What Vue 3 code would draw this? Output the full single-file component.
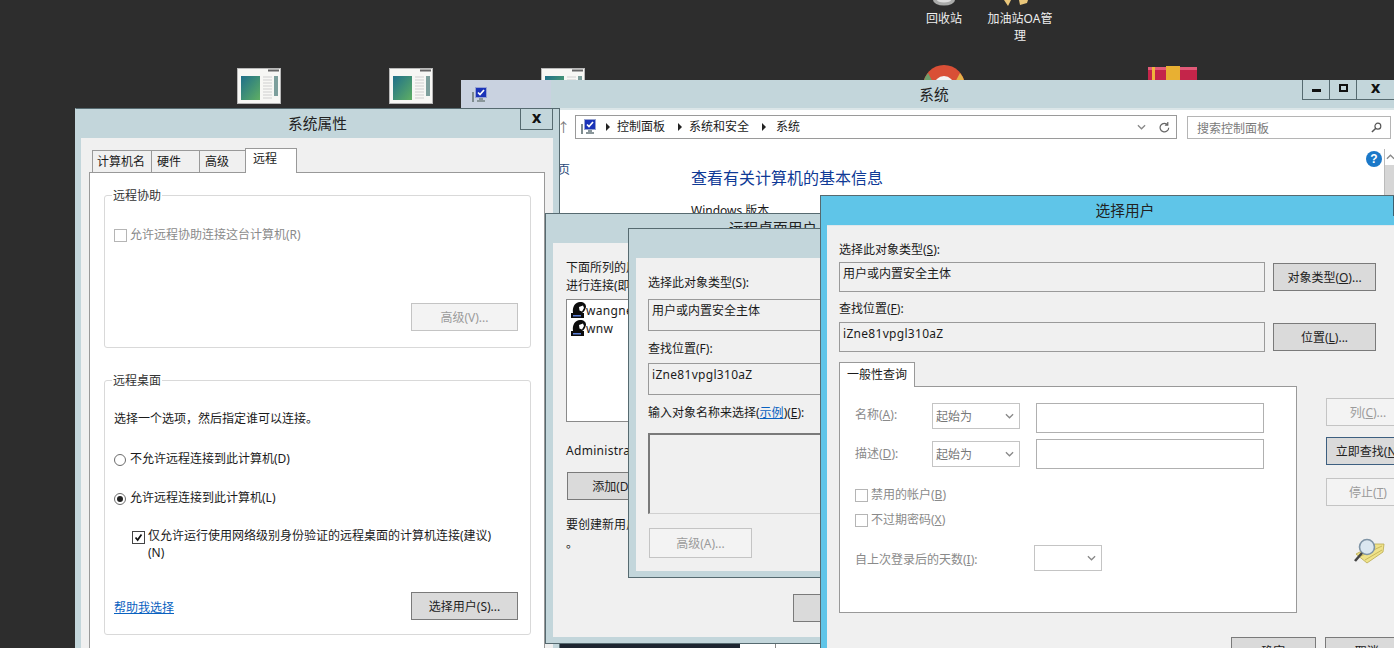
<template>
  <div class="desktop">
    <!-- desktop icons -->
    <svg v-for="n in 3" :key="n" class="thumb" :class="'thumb-' + n" viewBox="0 0 44 36">
      <rect x="0.5" y="0.5" width="43" height="35" fill="#f7f7f4" stroke="#b8b8b8" />
      <rect x="31" y="1.5" width="11" height="2" fill="#666" />
      <defs>
        <linearGradient :id="'tg' + n" x1="0" y1="0" x2="1" y2="1">
          <stop offset="0" stop-color="#1f6f8a" />
          <stop offset="1" stop-color="#5faf63" />
        </linearGradient>
      </defs>
      <rect x="4" y="8" width="19" height="24" :fill="'url(#tg' + n + ')'" />
      <path d="M26 9h9M26 12h9M26 15h9M26 18h9M26 21h9M26 24h9M26 27h9M26 30h9" stroke="#cfcfcf" />
      <rect x="37" y="8" width="4" height="20" fill="#7d9f9c" />
    </svg>

    <svg class="bin" viewBox="0 0 24 6">
      <ellipse cx="12" cy="0" rx="11" ry="5.5" fill="#a9aaa9" />
      <ellipse cx="12" cy="0" rx="7" ry="2.5" fill="#ddd" />
    </svg>
    <div class="desk-label bin-label">回收站</div>
    <svg class="oa" viewBox="0 0 28 7">
      <path d="M4 0l4 6 3-6zM19 0l1 5 7-2 1-3z" fill="#e9c67a" />
    </svg>
    <div class="desk-label oa-label">加油站OA管理</div>
    <svg class="chrome" viewBox="0 0 42 16">
      <circle cx="21" cy="21" r="21" fill="#d94f36" />
      <path d="M0 21a21 21 0 0 1 5-13l7 13z" fill="#6f9d6c" />
      <path d="M42 21a21 21 0 0 0-5-13l-7 13z" fill="#e3b24a" />
      <circle cx="21" cy="21" r="10" fill="#f3f3f3" />
    </svg>
    <svg class="bundle" viewBox="0 0 49 15">
      <rect x="0" y="1" width="49" height="14" fill="#c4254a" />
      <rect x="0" y="1" width="49" height="3" fill="#e25a78" />
      <rect x="4" y="1" width="3" height="14" fill="#f0b43c" />
      <rect x="18" y="0" width="14" height="15" fill="#e8b032" />
    </svg>

    <!-- 系统 -->
    <section class="win win-sys">
      <header class="titlebar sys-title">
        <svg class="mon mon-title" viewBox="0 0 16 16"><use href="#mon" /></svg>
        <span>系统</span>
        <div class="caption">
          <button class="cap"><i class="g-min"></i></button>
          <button class="cap"><i class="g-max"></i></button>
          <button class="cap cap-x">x</button>
        </div>
      </header>
      <div class="sys-nav">
        <span class="up">↑</span>
        <div class="address">
          <svg class="mon" viewBox="0 0 16 16">
            <defs>
              <g id="mon">
                <path d="M1 5h2v10H1z" fill="#7f8c8f" />
                <rect x="4.5" y="0.5" width="11" height="10" fill="#1a33b8" stroke="#97a3d2" />
                <path d="M7 5.500l2 2 4-4.500" stroke="#fff" stroke-width="1.7" fill="none" />
                <path d="M8 11h4v2h2v2H6v-2h2z" fill="#8a969a" />
              </g>
            </defs>
            <use href="#mon" />
          </svg>
          <template v-for="c in crumbs" :key="c">
            <i class="crumb-arrow"></i>
            <span class="crumb">{{ c }}</span>
          </template>
          <svg class="chev addr-chev" viewBox="0 0 10 6"><path d="M1 1l4 4 4-4" /></svg>
          <svg class="refresh" viewBox="0 0 12 14">
            <path d="M9.6 4.200a4.700 4.700 0 1 0 1 3M9.600 1v3.400H6.400" fill="none" stroke="#666" stroke-width="1.3" />
          </svg>
        </div>
        <div class="search">
          <span>搜索控制面板</span>
          <svg class="search-ic" viewBox="0 0 12 12">
            <circle cx="7.5" cy="4.5" r="3.2" fill="none" stroke="#555" stroke-width="1.3" />
            <path d="M5 7l-4 4" stroke="#555" stroke-width="1.6" />
          </svg>
        </div>
      </div>
      <div class="sys-main">
        <div class="side">页</div>
        <div class="sys-content">
          <h1>查看有关计算机的基本信息</h1>
          <div class="sys-sub">Windows 版本</div>
        </div>
        <div class="help">?</div>
        <div class="scroll"><div class="scroll-up"><svg class="chev" viewBox="0 0 10 6"><path d="M1 5l4-4 4 4" /></svg></div></div>
      </div>
      <div class="sys-strip"><div class="strip-dark"></div><div class="strip-light"></div></div>
    </section>

    <!-- 系统属性 -->
    <section class="win win-props">
      <header class="titlebar">
        <span>系统属性</span>
        <button class="cap props-x">x</button>
      </header>
      <div class="props-body">
        <div class="tabs">
          <span v-for="t in propTabs" :key="t.name" class="tab" :class="[t.cls, { active: t.active }]">{{ t.name }}</span>
        </div>
        <div class="props-panel">
          <div class="group group-a">
            <span class="legend">远程协助</span>
            <div class="row row-assist dim"><i class="box"></i>允许远程协助连接这台计算机(R)</div>
            <div class="group-foot foot-a">
              <button class="btn btn-off btn-w">高级(V)...</button>
            </div>
          </div>
          <div class="group group-b">
            <span class="legend">远程桌面</span>
            <div class="row row-intro">选择一个选项，然后指定谁可以连接。</div>
            <div class="row row-r1"><i class="radio"></i>不允许远程连接到此计算机(D)</div>
            <div class="row row-r2"><i class="radio on"></i>允许远程连接到此计算机(L)</div>
            <div class="row-nla">
              <i class="box checked">
                <svg viewBox="0 0 13 13"><path d="M3 6.5l2.5 3L10 3" fill="none" stroke="#111" stroke-width="2" /></svg>
              </i>
              <span>仅允许运行使用网络级别身份验证的远程桌面的计算机连接(建议)<br />(N)</span>
            </div>
            <div class="group-foot foot-b">
              <a class="link help-link">帮助我选择</a>
              <button class="btn btn-w">选择用户(S)...</button>
            </div>
          </div>
        </div>
      </div>
    </section>

    <!-- 远程桌面用户 -->
    <section class="win win-rdu">
      <header class="titlebar"><span>远程桌面用户</span></header>
      <div class="body rdu-body">
        <div class="line">下面所列的用</div>
        <div class="line">进行连接(即使</div>
        <div class="user-list">
          <div v-for="u in users" :key="u" class="user">
            <svg class="user-ic" viewBox="0 0 16 17">
              <path d="M1 11h13v5H1z" fill="#0c0c0c" />
              <path d="M3 13h8v1.500H3z" fill="#5b7fd8" />
              <path d="M3 11C2 5 5 0 10 0c4 0 6 2 6 5-1 4-3 6-6 7z" fill="#0c0c0c" />
              <path d="M9 5l4-1.500 1 2.500-2 3.500-2.500-1z" fill="#fff" />
            </svg>
            <span class="latin">{{ u }}</span>
          </div>
        </div>
        <div class="line latin admin">Administrator</div>
        <button class="btn rdu-add">添加(D)...</button>
        <div class="line rdu-note">要创建新用户</div>
        <div class="line rdu-dot">。</div>
        <button class="btn rdu-ok">确定</button>
      </div>
    </section>

    <!-- 选择用户 (behind) -->
    <section class="win win-pick">
      <header class="titlebar"></header>
      <div class="body pick-body">
        <div class="line">选择此对象类型(S):</div>
        <div class="field pick-field">用户或内置安全主体</div>
        <div class="line pick-label">查找位置(F):</div>
        <div class="field pick-field loc latin">iZne81vpgl310aZ</div>
        <div class="line pick-label">输入对象名称来选择(<a class="link">示例</a>)(<u>E</u>):</div>
        <div class="names"></div>
        <button class="btn btn-off pick-adv">高级(A)...</button>
      </div>
    </section>

    <!-- 选择用户 (active) -->
    <section class="win win-top">
      <header class="titlebar top-title"><span>选择用户</span><i class="top-edge"></i></header>
      <div class="body top-body">
        <div class="line">选择此对象类型(<u>S</u>):</div>
        <div class="top-row first">
          <div class="field top-field">用户或内置安全主体</div>
          <button class="btn top-btn">对象类型(<u>O</u>)...</button>
        </div>
        <div class="line top-label">查找位置(<u>F</u>):</div>
        <div class="top-row">
          <div class="field top-field latin">iZne81vpgl310aZ</div>
          <button class="btn top-btn">位置(<u>L</u>)...</button>
        </div>
        <div class="query">
          <div class="query-left">
            <div class="tab active query-tab">一般性查询</div>
            <div class="query-panel">
              <div v-for="(r, i) in queryRows" :key="r.label" class="q-row" :class="{ 'q-first': i === 0 }">
                <span class="q-label dim">{{ r.label }}(<u>{{ r.key }}</u>):</span>
                <div class="select">
                  <span>起始为</span>
                  <svg class="chev" viewBox="0 0 10 6"><path d="M1 1l4 4 4-4" /></svg>
                </div>
                <div class="q-input"></div>
              </div>
              <div v-for="c in queryChecks" :key="c.label" class="row dim" :class="c.cls">
                <i class="box"></i>{{ c.label }}(<u>{{ c.key }}</u>)
              </div>
              <div class="q-days">
                <span class="dim q-days-label">自上次登录后的天数(<u>I</u>):</span>
                <div class="select select-small">
                  <svg class="chev" viewBox="0 0 10 6"><path d="M1 1l4 4 4-4" /></svg>
                </div>
              </div>
            </div>
          </div>
          <div class="query-right">
            <button class="btn btn-off side-btn">列(<u>C</u>)...</button>
            <button class="btn side-btn find">立即查找(<u>N</u>)</button>
            <button class="btn btn-off side-btn stop">停止(<u>T</u>)</button>
            <svg class="finder" viewBox="0 0 32 26">
              <path d="M3 16L22 6l9 0-1 8-16 11z" fill="#efe28a" stroke="#b9a94e" stroke-width=".8" />
              <path d="M8 18l21-10M12 22l17-10" stroke="#c9b95b" />
              <circle cx="14" cy="9" r="7.5" fill="#dbe7f0" stroke="#7f94a6" stroke-width="1.6" />
              <path d="M9 15L2 23" stroke="#444" stroke-width="2.6" />
            </svg>
          </div>
        </div>
        <div class="top-foot">
          <button class="btn foot-btn">确定</button>
          <button class="btn foot-btn">取消</button>
        </div>
      </div>
    </section>
  </div>
</template>

<script setup>
const crumbs = ['控制面板', '系统和安全', '系统'];

const propTabs = [
  { name: '计算机名', cls: 't-name' },
  { name: '硬件', cls: 't-hw' },
  { name: '高级', cls: 't-adv' },
  { name: '远程', cls: 't-rem', active: true },
];

const users = ['wangnew', 'wnw'];

const queryRows = [
  { label: '名称', key: 'A' },
  { label: '描述', key: 'D' },
];

const queryChecks = [
  { label: '禁用的帐户', key: 'B', cls: 'q-c1' },
  { label: '不过期密码', key: 'X', cls: 'q-c2' },
];
</script>

<style scoped>
.desktop {
  position: relative;
  width: 1394px;
  height: 648px;
  overflow: hidden;
  background: #2d2d2d;
  font-family: "Noto Sans", "Noto Sans CJK SC", sans-serif;
  font-size: 12px;
  color: #1a1a1a;
}

/* desktop icons, free canvas */
.thumb { position: absolute; top: 68px; width: 44px; height: 36px; }
.thumb-1 { left: 237px; }
.thumb-2 { left: 389px; }
.thumb-3 { left: 541px; }
.bin { position: absolute; left: 932px; top: 0; width: 24px; height: 6px; }
.oa { position: absolute; left: 1000px; top: 0; width: 28px; height: 7px; }
.chrome { position: absolute; left: 923px; top: 65px; width: 42px; height: 16px; }
.bundle { position: absolute; left: 1148px; top: 66px; width: 49px; height: 15px; }
.desk-label {
  position: absolute;
  top: 10px;
  text-align: center;
  color: #eee;
  line-height: 17px;
}
.bin-label { left: 914px; width: 60px; }
.oa-label { left: 985px; width: 70px; }

/* windows */
.win {
  position: absolute;
  box-sizing: border-box;
  border: 1px solid #566a70;
  background: #c3d6db;
  display: flex;
  flex-direction: column;
}
.titlebar {
  position: relative;
  box-sizing: border-box;
  flex: none;
  height: 29px;
  padding-bottom: 2px;
  display: flex;
  align-items: center;
  justify-content: center;
  font-size: 14.7px;
  color: #222;
}
.cap {
  box-sizing: border-box;
  padding: 0 0 3px;
  background: none;
  border: 1px solid #566a70;
  border-top: none;
  font-family: "DejaVu Sans", sans-serif;
  font-weight: 700;
  font-size: 15px;
  color: #111;
  display: flex;
  align-items: center;
  justify-content: center;
}
.body {
  flex: 1;
  min-height: 0;
  margin: 0 0 6px 7px;
  background: #f0f0f0;
  box-sizing: border-box;
}
.line {
  line-height: 18px;
  height: 18px;
  white-space: nowrap;
}
.latin { letter-spacing: 0.3px; }
.dim { color: #8a8a8a; }
u { text-underline-offset: 1px; }

.btn {
  box-sizing: border-box;
  display: block;
  background: #dadada;
  border: 1px solid #7a7a7a;
  font: inherit;
  color: #222;
  padding: 0;
  white-space: nowrap;
}
.btn-off {
  background: #f3f3f3;
  border-color: #c4c4c4;
  color: #9b9b9b;
}
.btn-w { width: 107px; height: 28px; }

.link { color: #0a62c0; text-decoration: underline; }

.box {
  flex: none;
  box-sizing: border-box;
  width: 13px;
  height: 13px;
  margin-right: 3px;
  border: 1px solid #b5b5b5;
  background: #fff;
  display: block;
}
.box.checked { border-color: #444; }
.box.checked svg { display: block; width: 11px; height: 11px; }
.radio {
  flex: none;
  box-sizing: border-box;
  width: 12px;
  height: 12px;
  margin: 1px 4px 0 0;
  border: 1px solid #6c6c6c;
  border-radius: 50%;
  background: #fff;
  display: flex;
  align-items: center;
  justify-content: center;
}
.radio.on::after {
  content: "";
  width: 6px;
  height: 6px;
  border-radius: 50%;
  background: #222;
}
.row {
  display: flex;
  align-items: center;
  height: 18px;
  line-height: 18px;
  white-space: nowrap;
}
.chev {
  width: 9px;
  height: 6px;
  fill: none;
  stroke: #888;
  stroke-width: 1.4;
}

/* 系统 */
.win-sys {
  left: 461px;
  top: 80px;
  width: 940px;
  height: 580px;
  background: #fff;
  border: none;
}
.sys-title {
  height: 30px;
  padding-left: 6px;
  padding-bottom: 2px;
  background: linear-gradient(90deg, #c9d2e0 0, #c9d2e0 90px, #c3d6db 90px);
  border-bottom: 2px solid #dbe6e8;
}
.mon { flex: none; display: block; width: 16px; height: 16px; }
.mon-title { position: absolute; left: 10px; top: 7px; }
.caption {
  position: absolute;
  right: 7px;
  top: 0;
  height: 20px;
  display: flex;
}
.cap { height: 20px; width: 28px; margin-left: -1px; }
.cap-x { width: 38px; border-right: none; }
.g-min { display: block; width: 9px; height: 3px; margin-top: 5px; background: #111; }
.g-max { display: block; width: 9px; height: 8px; box-sizing: border-box; border: 2px solid #111; }
.sys-nav {
  flex: none;
  display: flex;
  align-items: flex-start;
  padding: 5px 0 0 96px;
}
.up {
  width: 18px;
  line-height: 24px;
  font-size: 13px;
  color: #777;
}
.address {
  box-sizing: border-box;
  width: 602px;
  height: 24px;
  border: 1px solid #9a9a9a;
  display: flex;
  align-items: center;
  padding-left: 4px;
}
.address > .mon { margin-right: -3px; }
.crumb-arrow {
  flex: none;
  width: 0;
  height: 0;
  margin: 0 7px 0 13px;
  border-left: 4px solid #222;
  border-top: 4px solid transparent;
  border-bottom: 4px solid transparent;
}
.crumb { line-height: 18px; }
.crumb:last-of-type { margin-left: 3px; }
.addr-chev { margin-left: auto; }
.refresh { width: 11px; height: 13px; margin: 0 6px 0 13px; }
.search {
  box-sizing: border-box;
  width: 204px;
  height: 23px;
  margin: 1px 0 0 10px;
  border: 1px solid #b5b5b5;
  display: flex;
  align-items: center;
  justify-content: space-between;
  padding: 0 8px 0 9px;
  color: #7a7a7a;
}
.search-ic { width: 11px; height: 11px; }
.sys-main {
  position: relative;
  flex: 1;
  display: flex;
}
.side {
  width: 133px;
  padding: 22px 0 0 97px;
  box-sizing: content-box;
  color: #2a4a7a;
  line-height: 18px;
}
.sys-content { padding-top: 28px; }
h1 {
  margin: 0;
  font-weight: 400;
  font-size: 16px;
  line-height: 22px;
  color: #0f3a96;
}
.sys-sub { margin-top: 13px; line-height: 18px; }
.help {
  position: absolute;
  left: 905px;
  top: 12px;
  width: 16px;
  height: 16px;
  border-radius: 50%;
  background: #1b78c8;
  color: #fff;
  font: 700 12px/16px "Liberation Sans", sans-serif;
  text-align: center;
}
.scroll {
  position: absolute;
  left: 923px;
  top: 10px;
  width: 11px;
  height: 100px;
  background: #d6d6d6;
  border-left: 1px solid #bbb;
}
.scroll-up {
  height: 16px;
  background: #fff;
  display: flex;
  justify-content: center;
  align-items: center;
}
.sys-strip {
  position: absolute;
  left: 99px;
  bottom: 12px;
  height: 4px;
  display: flex;
}
.strip-dark { width: 180px; background: #1d2530; }
.strip-light { width: 35px; border-right: 1px solid #8a8a8a; }

/* 系统属性 */
.win-props {
  left: 75px;
  top: 108px;
  width: 485px;
  height: 600px;
  border-left-color: #c3d6db;
}
.props-x {
  position: absolute;
  left: 445px;
  top: 0;
  width: 33px;
  height: 21px;
}
.props-body {
  flex: 1;
  margin: 0 6px 0 5px;
  padding: 10px 0 0 8px;
  background: #f0f0f0;
  box-sizing: border-box;
}
.tabs {
  display: flex;
  align-items: flex-end;
  height: 24px;
  margin-left: 3px;
  position: relative;
  z-index: 1;
}
.tab {
  box-sizing: border-box;
  border: 1px solid #999;
  border-bottom: none;
  height: 22px;
  line-height: 21px;
  padding-left: 4px;
  background: #f0f0f0;
  margin-right: -1px;
}
.tab.active {
  background: #fff;
  height: 25px;
  line-height: 20px;
  margin-bottom: -1px;
  margin-right: 0;
  padding-left: 7px;
}
.t-name { width: 60px; }
.t-hw { width: 49px; padding-left: 5px; }
.t-adv { width: 47px; padding-left: 5px; }
.t-rem { width: 52px; }
.props-panel {
  box-sizing: border-box;
  width: 456px;
  height: 560px;
  padding: 22px 0 0 14px;
  border: 1px solid #999;
  background: #fff;
}
.group {
  position: relative;
  box-sizing: border-box;
  width: 427px;
  padding-left: 9px;
  border: 1px solid #d9d9d9;
  border-radius: 3px;
}
.group-a { height: 153px; }
.group-b { height: 255px; margin-top: 32px; }
.legend {
  position: absolute;
  left: 7px;
  top: -9px;
  padding: 0 1px;
  background: #fff;
  line-height: 18px;
  color: #333;
}
.row-assist { margin-top: 30px; }
.group-foot {
  display: flex;
  justify-content: flex-end;
  align-items: center;
  padding-right: 12px;
}
.foot-a { margin-top: 59px; }
.row-intro { margin-top: 29px; }
.row-r1 { margin-top: 22px; }
.row-r2 { margin-top: 21px; }
.row-nla {
  display: flex;
  align-items: flex-start;
  margin: 20px 0 0 18px;
  line-height: 17px;
}
.row-nla .box { margin-top: 4px; }
.foot-b { justify-content: space-between; margin-top: 31px; }
.help-link { padding-top: 2px; }

/* 远程桌面用户 */
.win-rdu {
  left: 545px;
  top: 213px;
  width: 456px;
  height: 431px;
}
.rdu-body { padding: 16px 0 0 13px; }
.user-list {
  box-sizing: border-box;
  width: 200px;
  height: 123px;
  margin-top: 4px;
  padding: 1px 3px;
  border: 1px solid #8a8a8a;
  background: #fff;
}
.user {
  display: flex;
  align-items: center;
  height: 18px;
}
.user-ic { flex: none; width: 16px; height: 17px; }
.admin { margin-top: 20px; }
.rdu-add { width: 100px; height: 28px; margin: 12px 0 0 1px; }
.rdu-note { margin-top: 16px; }
.rdu-dot { margin-top: 1px; }
.rdu-ok { width: 88px; height: 28px; margin: 41px 0 0 227px; }

/* 选择用户 behind */
.win-pick {
  left: 628px;
  top: 228px;
  width: 400px;
  height: 350px;
}
.pick-body { padding: 16px 0 0 12px; }
.field {
  box-sizing: border-box;
  border: 1px solid #9a9a9a;
  background: #f0f0f0;
  padding: 2px 3px;
  line-height: 18px;
}
.pick-field { height: 32px; width: 340px; margin-top: 7px; }
.pick-field.loc { margin-top: 5px; }
.pick-label { margin-top: 9px; }
.names {
  box-sizing: border-box;
  width: 340px;
  height: 81px;
  margin-top: 11px;
  border-top: 2px solid #7a7a7a;
  border-left: 2px solid #7a7a7a;
  border-bottom: 1px solid #d0d0d0;
}
.pick-adv { width: 103px; height: 30px; margin: 14px 0 0 1px; }

/* 选择用户 active */
.win-top {
  left: 820px;
  top: 195px;
  width: 590px;
  height: 480px;
  background: #5fc5e8;
}
.top-title { padding-left: 20px; }
.top-edge {
  position: absolute;
  left: 572px;
  top: 0;
  height: 20px;
  border-left: 1px solid #3a5f70;
}
.top-body { padding: 15px 0 0 12px; margin-left: 6px; border-top: 1px solid #dfe6ea; }
.top-row {
  display: flex;
  align-items: center;
  gap: 8px;
  margin-top: 4px;
}
.top-row.first { margin-top: 3px; }
.top-field { width: 426px; height: 30px; }
.top-btn { width: 103px; height: 28px; }
.top-label { margin-top: 8px; }
.query { display: flex; margin-top: 10px; }
.tab.active.query-tab {
  width: 76px;
  height: 25px;
  line-height: 24px;
  margin: 0 0 -1px;
  padding-left: 7px;
  position: relative;
  z-index: 1;
}
.query-panel {
  box-sizing: border-box;
  width: 458px;
  height: 227px;
  padding: 16px 0 0 15px;
  border: 1px solid #999;
  background: #fff;
}
.q-row {
  display: flex;
  align-items: center;
  height: 30px;
  margin-top: 6px;
}
.q-first { margin-top: 0; }
.q-label { width: 77px; flex: none; line-height: 18px; }
.select {
  flex: none;
  box-sizing: border-box;
  width: 88px;
  height: 26px;
  padding: 0 5px 0 3px;
  border: 1px solid #c4c4c4;
  color: #777;
  display: flex;
  align-items: center;
  justify-content: space-between;
}
.select-small { width: 68px; justify-content: flex-end; }
.q-input {
  flex: none;
  box-sizing: border-box;
  width: 228px;
  height: 30px;
  margin-left: 16px;
  border: 1px solid #b0b0b0;
}
.q-first .q-label { align-self: flex-start; line-height: 24px; }
.q-first .select { align-self: flex-start; }
.q-c1 { margin-top: 17px; }
.q-c2 { margin-top: 7px; }
.q-days { display: flex; align-items: center; margin-top: 16px; height: 25px; }
.q-days-label { width: 179px; padding-top: 3px; }
.query-right { margin-left: 29px; padding-top: 36px; }
.side-btn { width: 84px; height: 28px; }
.find { margin-top: 11px; border-color: #3d5f80; }
.stop { margin-top: 13px; }
.finder { display: block; width: 32px; height: 26px; margin: 32px 0 0 27px; }
.top-foot {
  display: flex;
  gap: 9px;
  margin: 24px 0 0 392px;
}
.foot-btn { width: 86px; height: 28px; }
</style>

<style>
html, body { margin: 0; overflow: hidden; background: #2d2d2d; }
</style>
